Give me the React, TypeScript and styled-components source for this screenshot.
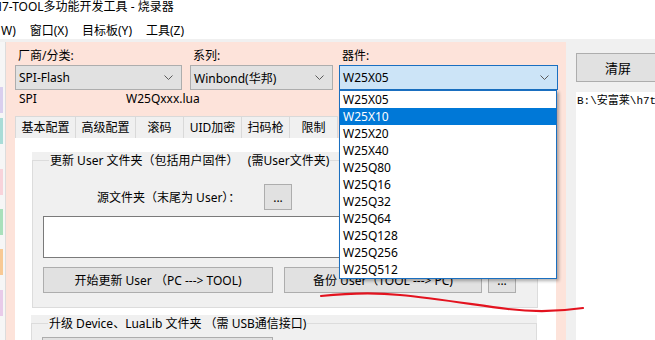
import React from 'react'
import styled, { createGlobalStyle } from 'styled-components'

const GlobalStyle = createGlobalStyle`
  html, body {
    margin: 0;
    padding: 0;
    background: #fff;
  }
  body {
    font-family: "Noto Sans", "Noto Sans CJK SC", sans-serif;
    font-size: 12px;
    color: #000;
  }
`

const menus = ['W)', '窗口(X)', '目标板(Y)', '工具(Z)']
const tabs = [
  { label: '基本配置', w: 61 },
  { label: '高级配置', w: 60 },
  { label: '滚码', w: 48 },
  { label: 'UID加密', w: 58 },
  { label: '扫码枪', w: 48 },
  { label: '限制', w: 48 },
]
const chips = [
  { color: '#d9cfee', gap: 0 },
  { color: '#a9dcd7', gap: 5 },
  { color: '#f8d3da', gap: 25 },
  { color: '#a9e0bb', gap: 14 },
  { color: '#f8c994', gap: 14 },
  { color: '#e8cbe9', gap: 15 },
]
const devices = [
  'W25X05', 'W25X10', 'W25X20', 'W25X40', 'W25Q80', 'W25Q16',
  'W25Q32', 'W25Q64', 'W25Q128', 'W25Q256', 'W25Q512',
]

function Chevron() {
  return (
    <svg width="9" height="5" viewBox="0 0 9 5">
      <polyline points="0.5,0.5 4.5,4.5 8.5,0.5" fill="none" stroke="#5a5a5a" strokeWidth="1" />
    </svg>
  )
}

export default function App() {
  return (
    <Window>
      <GlobalStyle />
      <TitleBar>
        <Title>H7-TOOL多功能开发工具 - 烧录器</Title>
      </TitleBar>
      <MenuBar>
        {menus.map((m) => (
          <MenuItem key={m}>{m}</MenuItem>
        ))}
      </MenuBar>
      <Separator />
      <Main>
        <SideStrip>
          {chips.map((c, i) => (
            <Chip key={i} $color={c.color} $gap={c.gap} />
          ))}
        </SideStrip>
        <PinkPanel>
          <FieldRow>
            <Field $w={167} $ml={0}>
              <FieldLabel>厂商/分类:</FieldLabel>
              <Combo>
                <span>SPI-Flash</span>
                <Chevron />
              </Combo>
            </Field>
            <Field $w={143} $ml={8}>
              <FieldLabel>系列:</FieldLabel>
              <Combo>
                <span>Winbond(华邦)</span>
                <Chevron />
              </Combo>
            </Field>
            <Field $w={219} $ml={6}>
              <FieldLabel>器件:</FieldLabel>
              <Combo $focus>
                <span>W25X05</span>
                <Chevron />
              </Combo>
              <DropList>
                {devices.map((d, i) => (
                  <DropItem key={d} $active={i === 1}>{d}</DropItem>
                ))}
              </DropList>
            </Field>
          </FieldRow>
          <InfoRow>
            <InfoCell>SPI</InfoCell>
            <span>W25Qxxx.lua</span>
          </InfoRow>
          <TabBar>
            {tabs.map((t) => (
              <Tab key={t.label} $w={t.w}>{t.label}</Tab>
            ))}
          </TabBar>
          <TabBody>
            <GroupPanel $ml={0}>
              <Frame>
                <Legend>更新 User 文件夹（包括用户固件）   (需User文件夹)</Legend>
                <SourceRow>
                  <SourceLabel>源文件夹（末尾为 User）：</SourceLabel>
                  <Button $w={28} $ml={0}>...</Button>
                </SourceRow>
                <TextBox />
                <ButtonRow>
                  <Button $w={230} $ml={0}>开始更新 User （PC ---&gt; TOOL)</Button>
                  <Button $w={198} $ml={11}>备份 User（TOOL ---&gt; PC)</Button>
                  <Button $w={28} $ml={6}>...</Button>
                </ButtonRow>
              </Frame>
            </GroupPanel>
            <GroupPanel $ml={-1}>
              <Frame>
                <Legend>升级 Device、LuaLib 文件夹 （需 USB通信接口)</Legend>
                <LowerRow>
                  <Button $w={231} $ml={0} />
                </LowerRow>
              </Frame>
            </GroupPanel>
          </TabBody>
        </PinkPanel>
        <RightPanel>
          <ClearButton>清屏</ClearButton>
          <LogArea>{'B:\\安富莱\\h7tool\\'}</LogArea>
        </RightPanel>
      </Main>
      <Scribble viewBox="0 0 655 340">
        <path
          d="M321 296 C340 294 372 292 400 295 C432 298 470 304 508 309 C533 312 556 312 583 308"
          fill="none"
          stroke="#e3131f"
          strokeWidth="2.2"
          strokeLinecap="round"
        />
      </Scribble>
    </Window>
  )
}

const Window = styled.div`
  position: relative;
  width: 655px;
  height: 340px;
  overflow: hidden;
  display: flex;
  flex-direction: column;
  background: #fff;
`

const TitleBar = styled.div`
  height: 22px;
  line-height: 14px;
  white-space: nowrap;
`

const Title = styled.span`
  display: inline-block;
  margin-left: -7px;
`

const MenuBar = styled.div`
  height: 17px;
  line-height: 18px;
  display: flex;
`

const MenuItem = styled.div`
  padding: 0 7px;
  white-space: nowrap;

  &:first-child {
    margin-left: -6px;
  }
`

const Separator = styled.div`
  height: 3px;
  background: #f0f0f0;
`

const Main = styled.div`
  flex: 1;
  display: flex;
  min-height: 0;
`

const SideStrip = styled.div`
  width: 5px;
  background: #f6f6f6;
  border-right: 1px solid #dcdcdc;
  padding-top: 45px;
  display: flex;
  flex-direction: column;
`

const Chip = styled.div<{ $color: string; $gap: number }>`
  width: 3px;
  height: 26px;
  background: ${(p) => p.$color};
  margin-top: ${(p) => p.$gap}px;
`

const PinkPanel = styled.div`
  width: 560px;
  box-sizing: border-box;
  background: #fde3da;
  padding: 5px 0 0 9px;
  display: flex;
  flex-direction: column;
`

const FieldRow = styled.div`
  display: flex;
`

const Field = styled.div<{ $w: number; $ml: number }>`
  position: relative;
  width: ${(p) => p.$w}px;
  margin-left: ${(p) => p.$ml}px;
  display: flex;
  flex-direction: column;
`

const FieldLabel = styled.div`
  height: 18px;
  line-height: 18px;
  padding-left: 3px;
`

const Combo = styled.div<{ $focus?: boolean }>`
  height: 25px;
  box-sizing: border-box;
  border: 1px solid ${(p) => (p.$focus ? '#1a6fc0' : '#adadad')};
  background: ${(p) => (p.$focus ? '#cce4f7' : '#e1e1e1')};
  display: flex;
  align-items: center;
  justify-content: space-between;
  padding: 0 8px 0 3px;
  white-space: nowrap;
`

const DropList = styled.div`
  position: absolute;
  top: 100%;
  left: 0;
  width: 218px;
  box-sizing: border-box;
  border: 1px solid #1a6fc0;
  background: #fff;
  box-shadow: 2px 2px 3px rgba(0, 0, 0, 0.3);
  z-index: 5;
`

const DropItem = styled.div<{ $active?: boolean }>`
  height: 17px;
  line-height: 17px;
  padding-left: 3px;
  background: ${(p) => (p.$active ? '#0078d7' : '#fff')};
  color: ${(p) => (p.$active ? '#fff' : '#000')};
`

const InfoRow = styled.div`
  display: flex;
  height: 16px;
  line-height: 16px;
  margin-top: 1px;
  padding-left: 4px;
`

const InfoCell = styled.span`
  width: 107px;
`

const TabBar = styled.div`
  display: flex;
  height: 22px;
  margin-top: 9px;
`

const Tab = styled.div<{ $w: number }>`
  width: ${(p) => p.$w}px;
  box-sizing: border-box;
  background: #f0f0f0;
  border-top: 1px solid #d9d9d9;
  border-right: 1px solid #d9d9d9;
  text-align: center;
  line-height: 21px;
  white-space: nowrap;

  &:first-child {
    border-left: 1px solid #d9d9d9;
  }
`

const TabBody = styled.div`
  flex: 1;
  width: 541px;
  box-sizing: border-box;
  background: #fff;
  padding: 14px 0 0 17px;
  display: flex;
  flex-direction: column;
  gap: 7px;
`

const GroupPanel = styled.div<{ $ml: number }>`
  width: 506px;
  margin-left: ${(p) => p.$ml}px;
  background: #f0f0f0;
`

const Frame = styled.fieldset`
  margin: 0;
  padding: 0 10px 14px;
  border: 1px solid #dcdcdc;
  min-width: 0;
`

const Legend = styled.legend`
  margin-left: 6px;
  padding: 0 1px;
  line-height: 17px;
  white-space: pre;
`

const SourceRow = styled.div`
  display: flex;
  align-items: center;
  height: 26px;
  margin-top: 15px;
  padding-left: 54px;
`

const SourceLabel = styled.div`
  width: 167px;
  white-space: nowrap;
`

const TextBox = styled.div`
  margin-top: 6px;
  height: 42px;
  width: 473px;
  box-sizing: border-box;
  border: 1px solid #7a7a7a;
  background: #fff;
`

const ButtonRow = styled.div`
  display: flex;
  margin-top: 9px;
`

const LowerRow = styled.div`
  display: flex;
  margin-top: 5px;
`

const Button = styled.div<{ $w: number; $ml: number }>`
  width: ${(p) => p.$w}px;
  margin-left: ${(p) => p.$ml}px;
  height: 26px;
  box-sizing: border-box;
  background: #e1e1e1;
  border: 1px solid #adadad;
  display: flex;
  align-items: center;
  justify-content: center;
  white-space: pre;
`

const RightPanel = styled.div`
  flex: 1;
  background: #f0f0f0;
  padding: 11px 0 0 10px;
  display: flex;
  flex-direction: column;
  min-width: 0;
`

const ClearButton = styled.div`
  width: 84px;
  height: 29px;
  flex-shrink: 0;
  box-sizing: border-box;
  background: #e1e1e1;
  border: 1px solid #adadad;
  display: flex;
  align-items: center;
  justify-content: center;
  font-size: 13px;
`

const LogArea = styled.div`
  margin-top: 10px;
  flex: 1;
  background: #fff;
  padding: 2px 0 0 1px;
  font-family: "Liberation Mono", "Noto Sans CJK SC", monospace;
  font-size: 11px;
  line-height: 14px;
  white-space: nowrap;
  overflow: hidden;
`

const Scribble = styled.svg`
  position: absolute;
  left: 0;
  top: 0;
  width: 655px;
  height: 340px;
  pointer-events: none;
`
